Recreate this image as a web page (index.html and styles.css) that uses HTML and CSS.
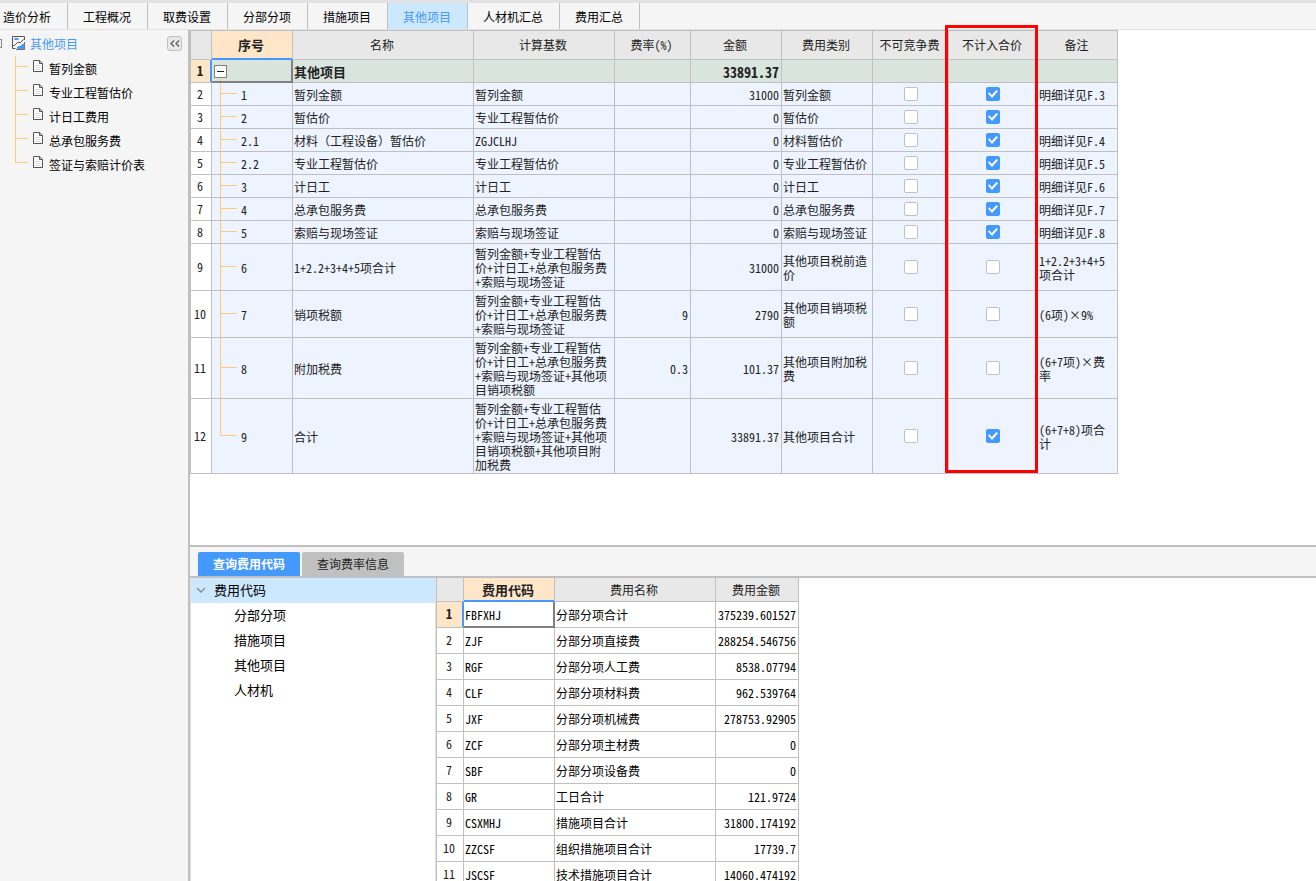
FILE: index.html
```html
<!DOCTYPE html>
<html lang="zh-CN">
<head>
<meta charset="utf-8">
<title>其他项目</title>
<link rel="stylesheet" href="styles.css">
</head>
<body>
<div class="app">
  <nav class="tabs">
    <button class="tab">造价分析</button>
    <button class="tab">工程概况</button>
    <button class="tab">取费设置</button>
    <button class="tab">分部分项</button>
    <button class="tab">措施项目</button>
    <button class="tab tab-active">其他项目</button>
    <button class="tab">人材机汇总</button>
    <button class="tab">费用汇总</button>
  </nav>
  <div class="body">
    <aside class="sidebar">
      <div class="side-head">
        <span class="cut-box"></span>
        <svg class="side-icon" width="14" height="14" viewBox="0 0 14 14"><path d="M3.500 12.500H.5V.5H12.500V3" fill="none" stroke="#555"/><path d="M2.500 3H6.500" stroke="#4499ff" stroke-width="2"/><path d="M.5 9.500H2.500L5.500 6.500H8.500L11.500 3.500H13" fill="none" stroke="#555"/><path d="M5 13V11.500L6.500 10H8.500L10.500 8H12V13Z" fill="#4499ff"/><path d="M12.500 6V13M4 13.500H13" stroke="#777"/></svg>
        <span class="side-title">其他项目</span>
        <button class="collapse" aria-label="收起"><svg width="10" height="7" viewBox="0 0 10 7"><path d="M4 .5L1 3.500L4 6.500M9 .5L6 3.500L9 6.500" fill="none" stroke="#555" stroke-width="1.200"/></svg></button>
      </div>
      <ul class="side-list">
        <li><svg class="doc" width="11" height="13" viewBox="0 0 11 13"><use href="#doc"/></svg>暂列金额</li>
        <li><svg class="doc" width="11" height="13" viewBox="0 0 11 13"><use href="#doc"/></svg>专业工程暂估价</li>
        <li><svg class="doc" width="11" height="13" viewBox="0 0 11 13"><use href="#doc"/></svg>计日工费用</li>
        <li><svg class="doc" width="11" height="13" viewBox="0 0 11 13"><use href="#doc"/></svg>总承包服务费</li>
        <li><svg class="doc" width="11" height="13" viewBox="0 0 11 13"><use href="#doc"/></svg>签证与索赔计价表</li>
      </ul>
      <svg class="defs" width="0" height="0"><defs><g id="doc"><path d="M.5 .5H6.500L9.500 3.500V11.500H.5Z" fill="#fff" stroke="#555"/><path d="M6.500 .5V3.500H9.500" fill="none" stroke="#555"/><path d="M2.500 5.500H7.500M2.500 7.500H7.500M2.500 9.500H7.500" stroke="#ddd"/></g></defs></svg>
    </aside>
    <main class="main">
      <section class="upper">
        <div class="sheet">
          <table class="grid cost">
            <colgroup><col class="w-no"><col class="w-seq"><col class="w-name"><col class="w-base"><col class="w-rate"><col class="w-amt"><col class="w-amt"><col class="w-rate"><col class="w-excl"><col class="w-note"></colgroup>
            <thead><tr><th></th><th class="current">序号</th><th>名称</th><th>计算基数</th><th>费率(%)</th><th>金额</th><th>费用类别</th><th>不可竞争费</th><th>不计入合价</th><th>备注</th></tr></thead>
            <tbody>
              <tr class="total"><th class="current">1</th><td class="cell-current"><button class="expander" aria-label="折叠"></button></td><td>其他项目</td><td></td><td></td><td class="num">33891.37</td><td></td><td></td><td></td><td></td></tr>
              <tr><th>2</th><td class="seq">1</td><td>暂列金额</td><td>暂列金额</td><td></td><td class="num">31000</td><td>暂列金额</td><td class="check"><input type="checkbox" aria-label="不可竞争费"></td><td class="check"><input type="checkbox" aria-label="不计入合价" checked></td><td class="note">明细详见F.3</td></tr>
              <tr><th>3</th><td class="seq">2</td><td>暂估价</td><td>专业工程暂估价</td><td></td><td class="num">0</td><td>暂估价</td><td class="check"><input type="checkbox" aria-label="不可竞争费"></td><td class="check"><input type="checkbox" aria-label="不计入合价" checked></td><td class="note"></td></tr>
              <tr><th>4</th><td class="seq">2.1</td><td>材料（工程设备）暂估价</td><td>ZGJCLHJ</td><td></td><td class="num">0</td><td>材料暂估价</td><td class="check"><input type="checkbox" aria-label="不可竞争费"></td><td class="check"><input type="checkbox" aria-label="不计入合价" checked></td><td class="note">明细详见F.4</td></tr>
              <tr><th>5</th><td class="seq">2.2</td><td>专业工程暂估价</td><td>专业工程暂估价</td><td></td><td class="num">0</td><td>专业工程暂估价</td><td class="check"><input type="checkbox" aria-label="不可竞争费"></td><td class="check"><input type="checkbox" aria-label="不计入合价" checked></td><td class="note">明细详见F.5</td></tr>
              <tr><th>6</th><td class="seq">3</td><td>计日工</td><td>计日工</td><td></td><td class="num">0</td><td>计日工</td><td class="check"><input type="checkbox" aria-label="不可竞争费"></td><td class="check"><input type="checkbox" aria-label="不计入合价" checked></td><td class="note">明细详见F.6</td></tr>
              <tr><th>7</th><td class="seq">4</td><td>总承包服务费</td><td>总承包服务费</td><td></td><td class="num">0</td><td>总承包服务费</td><td class="check"><input type="checkbox" aria-label="不可竞争费"></td><td class="check"><input type="checkbox" aria-label="不计入合价" checked></td><td class="note">明细详见F.7</td></tr>
              <tr><th>8</th><td class="seq">5</td><td>索赔与现场签证</td><td>索赔与现场签证</td><td></td><td class="num">0</td><td>索赔与现场签证</td><td class="check"><input type="checkbox" aria-label="不可竞争费"></td><td class="check"><input type="checkbox" aria-label="不计入合价" checked></td><td class="note">明细详见F.8</td></tr>
              <tr><th>9</th><td class="seq">6</td><td>1+2.2+3+4+5项合计</td><td>暂列金额+专业工程暂估价+计日工+总承包服务费+索赔与现场签证</td><td></td><td class="num">31000</td><td>其他项目税前造价</td><td class="check"><input type="checkbox" aria-label="不可竞争费"></td><td class="check"><input type="checkbox" aria-label="不计入合价"></td><td class="note">1+2.2+3+4+5项合计</td></tr>
              <tr><th>10</th><td class="seq">7</td><td>销项税额</td><td>暂列金额+专业工程暂估价+计日工+总承包服务费+索赔与现场签证</td><td class="num">9</td><td class="num">2790</td><td>其他项目销项税额</td><td class="check"><input type="checkbox" aria-label="不可竞争费"></td><td class="check"><input type="checkbox" aria-label="不计入合价"></td><td class="note">(6项)×9%</td></tr>
              <tr><th>11</th><td class="seq">8</td><td>附加税费</td><td>暂列金额+专业工程暂估价+计日工+总承包服务费+索赔与现场签证+其他项目销项税额</td><td class="num">0.3</td><td class="num">101.37</td><td>其他项目附加税费</td><td class="check"><input type="checkbox" aria-label="不可竞争费"></td><td class="check"><input type="checkbox" aria-label="不计入合价"></td><td class="note">(6+7项)×费率</td></tr>
              <tr><th>12</th><td class="seq seq-last">9</td><td>合计</td><td>暂列金额+专业工程暂估价+计日工+总承包服务费+索赔与现场签证+其他项目销项税额+其他项目附加税费</td><td></td><td class="num">33891.37</td><td>其他项目合计</td><td class="check"><input type="checkbox" aria-label="不可竞争费"></td><td class="check"><input type="checkbox" aria-label="不计入合价" checked></td><td class="note">(6+7+8)项合计</td></tr>
            </tbody>
          </table>
          <div class="highlight"></div>
        </div>
      </section>
      <section class="lower">
        <div class="subtabs">
          <button class="subtab subtab-active">查询费用代码</button>
          <button class="subtab">查询费率信息</button>
        </div>
        <div class="lookup">
          <div class="code-tree">
            <div class="node node-root"><svg width="10" height="6" viewBox="0 0 10 6"><path d="M1 1L5 5L9 1" fill="none" stroke="#888" stroke-width="1.300"/></svg>费用代码</div>
            <div class="node">分部分项</div>
            <div class="node">措施项目</div>
            <div class="node">其他项目</div>
            <div class="node">人材机</div>
          </div>
          <table class="grid codes">
            <colgroup><col class="w-line"><col class="w-code"><col class="w-title"><col class="w-value"></colgroup>
            <thead><tr><th></th><th class="current">费用代码</th><th>费用名称</th><th>费用金额</th></tr></thead>
            <tbody>
              <tr><th class="current">1</th><td class="cell-current">FBFXHJ</td><td>分部分项合计</td><td class="num">375239.601527</td></tr>
              <tr><th>2</th><td>ZJF</td><td>分部分项直接费</td><td class="num">288254.546756</td></tr>
              <tr><th>3</th><td>RGF</td><td>分部分项人工费</td><td class="num">8538.07794</td></tr>
              <tr><th>4</th><td>CLF</td><td>分部分项材料费</td><td class="num">962.539764</td></tr>
              <tr><th>5</th><td>JXF</td><td>分部分项机械费</td><td class="num">278753.92905</td></tr>
              <tr><th>6</th><td>ZCF</td><td>分部分项主材费</td><td class="num">0</td></tr>
              <tr><th>7</th><td>SBF</td><td>分部分项设备费</td><td class="num">0</td></tr>
              <tr><th>8</th><td>GR</td><td>工日合计</td><td class="num">121.9724</td></tr>
              <tr><th>9</th><td>CSXMHJ</td><td>措施项目合计</td><td class="num">31800.174192</td></tr>
              <tr><th>10</th><td>ZZCSF</td><td>组织措施项目合计</td><td class="num">17739.7</td></tr>
              <tr><th>11</th><td>JSCSF</td><td>技术措施项目合计</td><td class="num">14060.474192</td></tr>
            </tbody>
          </table>
        </div>
      </section>
    </main>
  </div>
</div>
</body>
</html>
```
FILE: styles.css
```css
* { box-sizing: border-box; }
body {
  margin: 0;
  font: 12px/14px "Noto Sans CJK SC", sans-serif;
  color: #000;
  background: #fff;
}
button { font: inherit; color: inherit; margin: 0; padding: 0; border: 0; background: none; }
.app { display: flex; flex-direction: column; height: 100vh; overflow: hidden; }

.tabs {
  display: flex;
  flex: none;
  height: 30px;
  background: #f5f5f5;
  border-top: 3px solid #e1e1e1;
  border-bottom: 1px solid #e1e1e1;
}
.tab { padding: 2px 16px 0 15px; border-right: 1px solid #c0c0c0; white-space: nowrap; }
.tab:first-child { padding-left: 3px; }
.tab-active { background: #cce8ff; color: #4499ff; }

.body { display: flex; flex: 1; min-height: 0; }
.sidebar { flex: none; width: 190px; background: #f5f5f5; border-right: 2px solid #c0c0c0; }
.side-head { display: flex; align-items: center; height: 26px; padding-right: 6px; }
.cut-box { width: 2px; height: 9px; border: 1px solid #888; border-left: 0; }
.side-icon { margin: 0 4px 0 10px; }
.side-title { flex: 1; padding-top: 2px; color: #4499ff; }
.collapse {
  display: flex;
  align-items: center;
  justify-content: center;
  width: 15px;
  height: 15px;
  border: 1px solid #c0c0c0;
  border-radius: 3px;
  background: #e8e8e8;
}
.side-list { margin: 0; padding: 0; list-style: none; }
.side-list li {
  display: flex;
  align-items: center;
  height: 24px;
  padding: 1px 0 0 33px;
  background:
    linear-gradient(#ffc97a, #ffc97a) 15px 0 / 1px 100% no-repeat,
    linear-gradient(#ffc97a, #ffc97a) 15px 10px / 13px 1px no-repeat;
}
.side-list li:last-child { background-size: 1px 11px, 13px 1px; }
.doc { margin: 0 5px 4px 0; }
.defs { display: block; }

.main { display: flex; flex-direction: column; flex: 1; min-width: 0; }
.upper { flex: none; height: 517px; border-bottom: 2px solid #c0c0c0; }
.sheet { position: relative; width: max-content; }

.grid {
  table-layout: fixed;
  border-collapse: separate;
  border-spacing: 0;
  border-left: 1px solid #c0c0c0;
  font-family: "Noto Sans Mono CJK SC", "Noto Sans CJK SC", monospace;
}
.grid th, .grid td {
  padding: 3px 3px 1px 1px;
  border-right: 1px solid #c0c0c0;
  border-bottom: 1px solid #c0c0c0;
  text-align: left;
  vertical-align: middle;
  font-weight: normal;
  word-break: break-all;
}
.grid th { padding: 0 2px 0 0; text-align: center; background: #fff; color: #222; }
.grid thead th { background: #e8e8e8; white-space: nowrap; }
.grid th.current { background: #ffe6c8; font-size: 13px; font-weight: bold; }
.grid thead th.current { border-bottom-color: #4499ff; box-shadow: inset 0 -1px #4499ff; }
.grid tbody th.current { border-right-color: #4499ff; box-shadow: inset -1px 0 #4499ff; }
.grid td.cell-current { border-right-color: #808080; border-bottom-color: #808080; box-shadow: inset -1px -1px #808080; }
.grid td.num { padding-right: 2px; text-align: right; }

.cost { width: 928px; color: #222; }
.cost thead th { height: 30px; border-top: 1px solid #c0c0c0; }
.cost tbody tr { height: 23px; }
.cost td { background: #edf4ff; }
.cost .total td { background: #dae4de; font-size: 13px; font-weight: bold; }
.cost .total td.num { font-size: 14px; }
.cost td.seq {
  padding-left: 29px;
  background:
    linear-gradient(#ffc97a, #ffc97a) 8px 0 / 1px 100% no-repeat,
    linear-gradient(#ffc97a, #ffc97a) 8px 49% / 17px 1px no-repeat,
    #edf4ff;
}
.cost td.seq-last { background-size: 1px 50%, 17px 1px, auto; }
.cost td.check { text-align: center; padding: 0; }
.cost .total td.cell-current {
  padding: 0 2px;
  background: linear-gradient(#ffc97a, #ffc97a) 8px 100% / 1px 8px no-repeat, #dae4de;
}
.w-no { width: 21px; }
.w-seq { width: 81px; }
.w-name { width: 181px; }
.w-base { width: 141px; }
.w-rate { width: 76px; }
.w-amt { width: 91px; }
.w-excl { width: 89px; }
.w-note { width: 80px; }

.expander {
  display: flex;
  align-items: center;
  justify-content: center;
  width: 13px;
  height: 13px;
  border: 1px solid #808080;
  background: #fff;
}
.expander::before { content: ""; width: 7px; height: 1px; background: #222; }

input[type="checkbox"] {
  appearance: none;
  display: block;
  width: 14px;
  height: 14px;
  margin: 0 auto;
  border: 1px solid #c0c0c0;
  border-radius: 2px;
  background: #fff;
}
input[type="checkbox"]:checked { border-color: #4499ff; background: #4499ff; }
input[type="checkbox"]:checked::after {
  content: "";
  display: block;
  width: 10px;
  height: 8px;
  margin: 2px auto 0;
  background: #fff;
  clip-path: polygon(0 45%, 13% 28%, 38% 62%, 85% 0, 100% 16%, 40% 100%);
}
.highlight {
  position: absolute;
  top: -5px;
  bottom: 1px;
  left: 755px;
  width: 93px;
  border: 3px solid #f00;
  pointer-events: none;
}

.lower { display: flex; flex-direction: column; flex: 1; min-height: 0; }
.subtabs {
  display: flex;
  flex: none;
  align-items: flex-end;
  gap: 2px;
  height: 31px;
  padding-left: 8px;
  background: #f5f5f5;
  border-bottom: 2px solid #c0c0c0;
}
.subtab { height: 24px; padding: 0 15px; border-radius: 2px 2px 0 0; background: #c0c0c0; color: #222; }
.subtab-active { background: #4499ff; color: #fff; font-weight: bold; }
.lookup { display: flex; flex: 1; min-height: 0; overflow: hidden; align-items: flex-start; }
.code-tree { flex: none; align-self: stretch; width: 246px; border-right: 1px solid #e1e1e1; border-left: 1px solid #e1e1e1; font-size: 13px; }
.node { display: flex; align-items: center; height: 25px; padding: 0 0 2px 43px; }
.node-root { gap: 8px; padding-left: 5px; background: #cce8ff; }
.codes { width: 363px; }
.codes thead th { height: 24px; }
.codes tbody th { padding-bottom: 2px; }
.codes td { padding: 1px 3px 1px 1px; }
.codes tbody tr { height: 26px; }
.w-line { width: 27px; }
.w-code { width: 91px; }
.w-title { width: 161px; }
.w-value { width: 83px; }
```
